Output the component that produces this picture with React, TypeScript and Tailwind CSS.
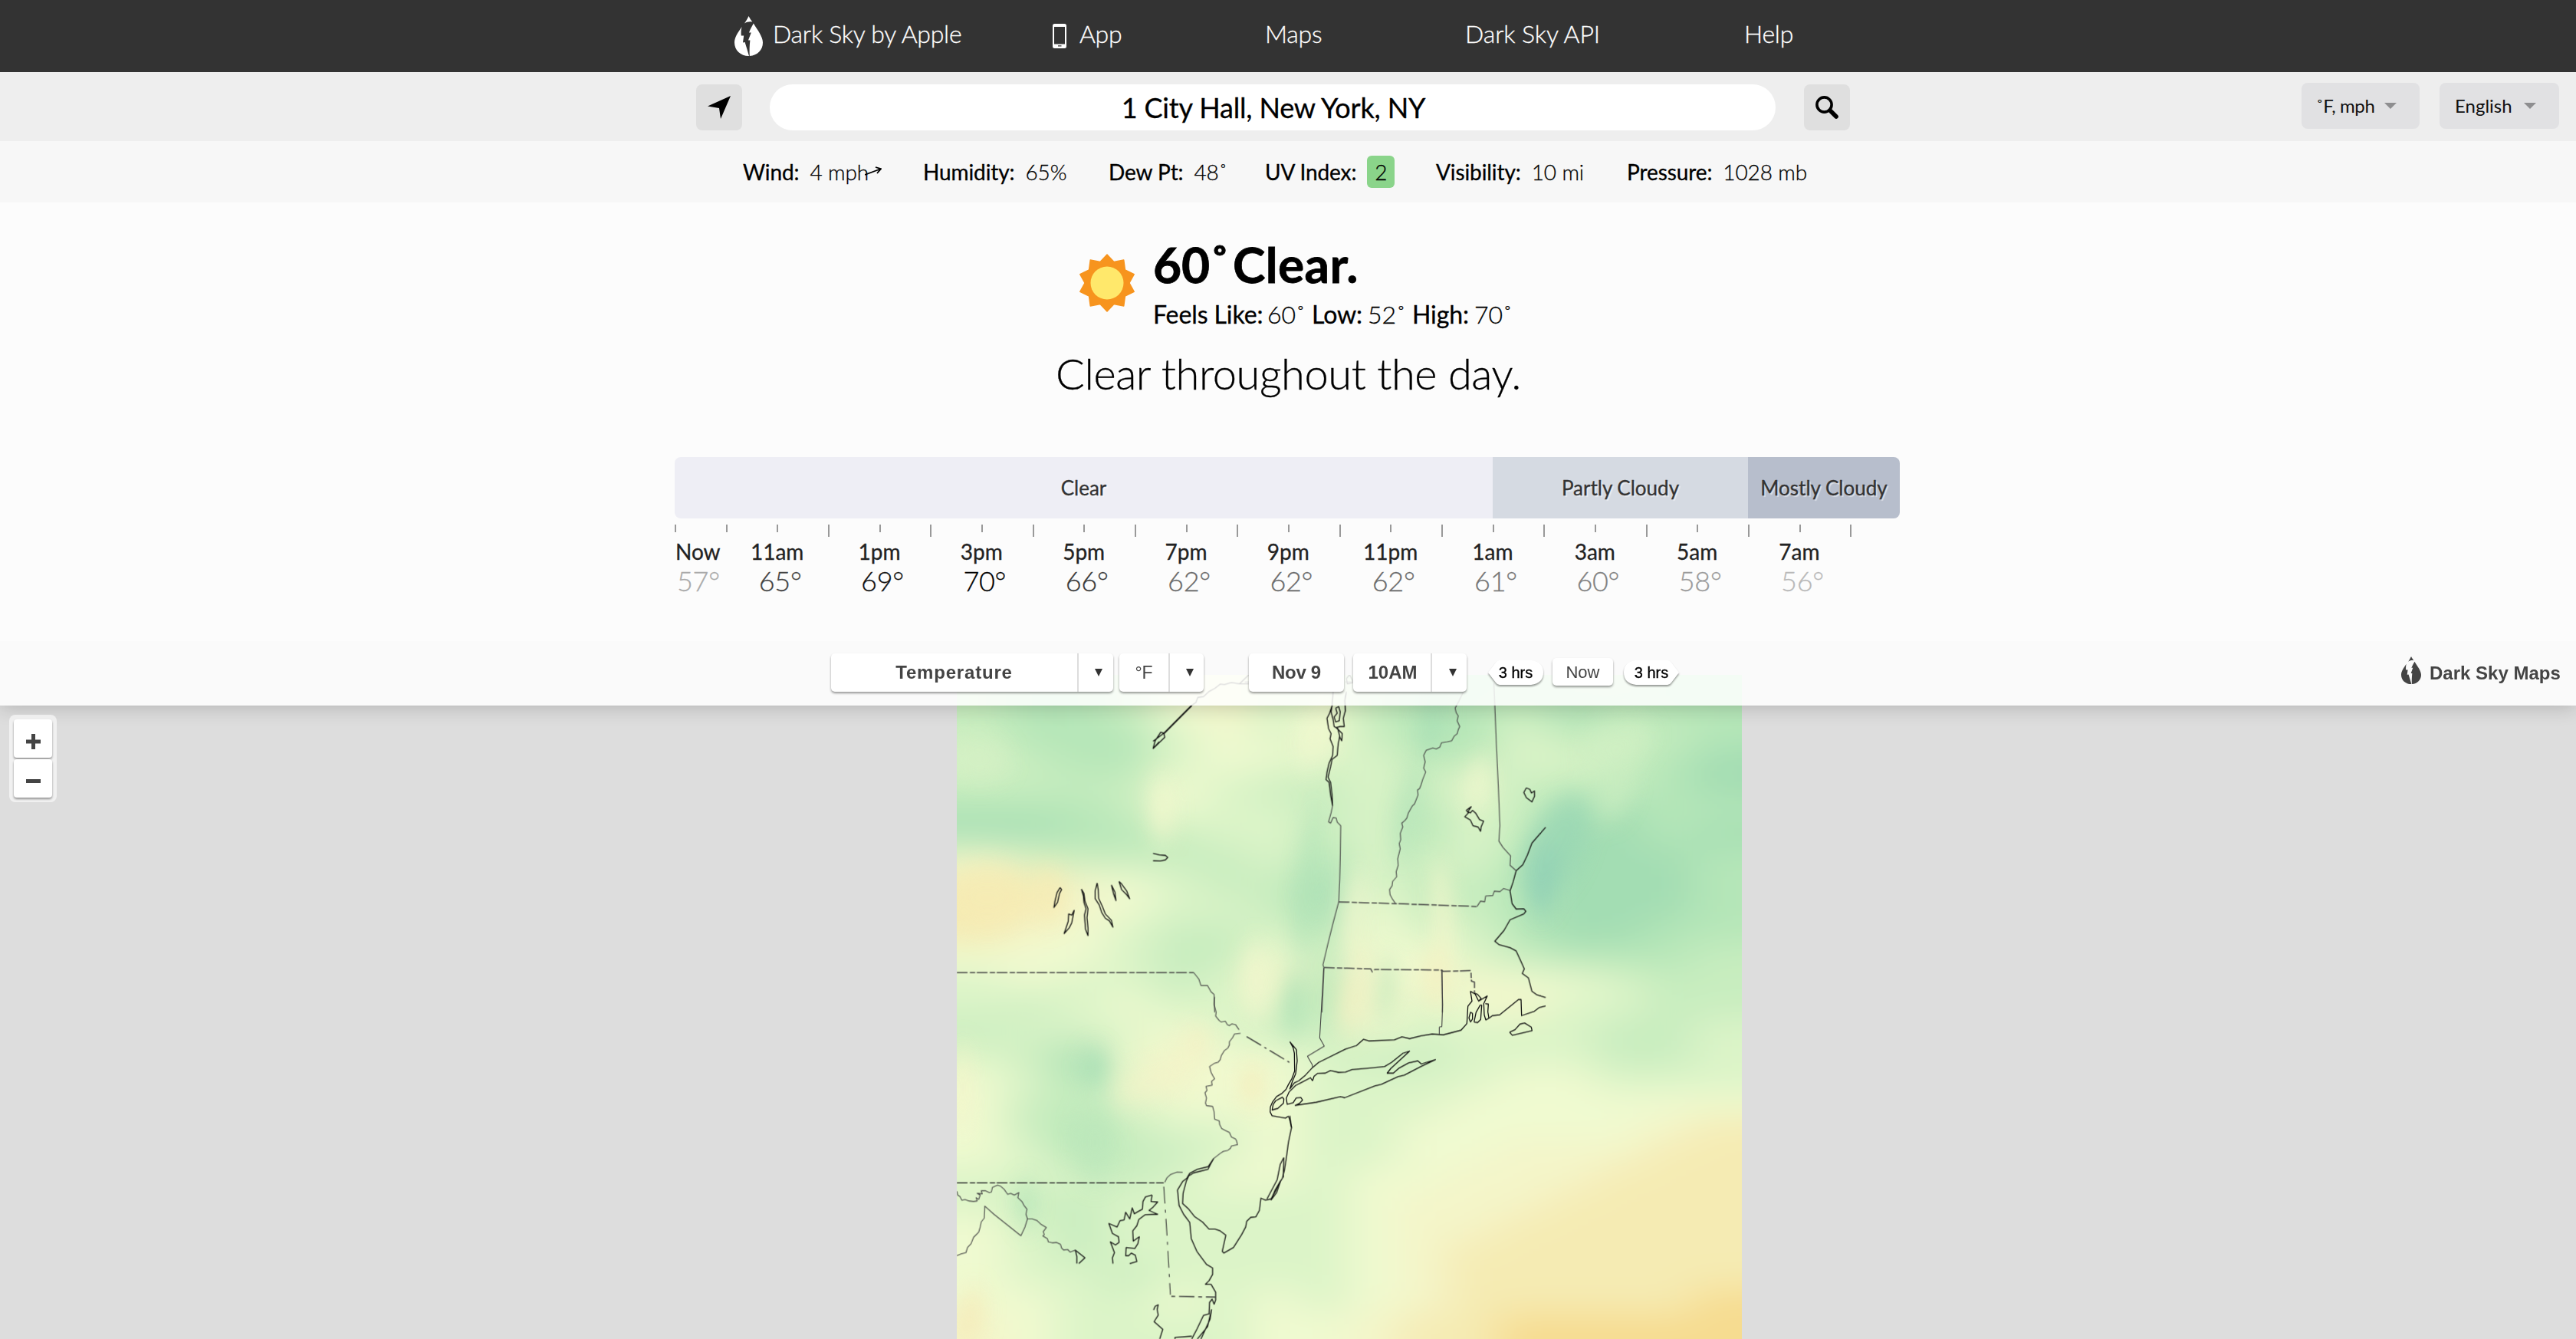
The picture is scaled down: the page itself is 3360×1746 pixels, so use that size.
import React from "react";

const LATO = "font-[Lato,sans-serif] [-webkit-text-stroke:0.3px]";
const ARIAL = "font-['Liberation_Sans',Arial,sans-serif] [-webkit-text-stroke:0px]";

function DropLogo({ className }: { className: string }) {
  return (
    <svg viewBox="0 0 37 52" className={className} preserveAspectRatio="none" fill="currentColor">
      <path d="M18.5 0 C20 3 21.5 5.2 23.4 7.6 C19.5 6.8 16 7.6 13 9.6 C15 6.5 17 3.5 18.5 0Z" />
      <path d="M9.6 14 C4 22 0 28 0 34.5 C0 44.5 8 52 18.5 52 L19 52 C17.4 46 15.4 40 13.6 34 L11 34.4 L12.2 25.4 L8.8 25.4 C8.4 21 8.6 17.5 9.6 14Z" />
      <path d="M24.8 9.6 C23 13 20.8 17 19 21.4 L21.8 21.4 L18 31.6 L20.4 31.6 C19.6 39 19.4 45 19.8 52 C30 51.4 37 44 37 34.5 C37 27 30 18 24.8 9.6Z" />
    </svg>
  );
}

const stats = [
  { label: "Wind:", value: "4 mph", box: "w-[235px]", arrow: true },
  { label: "Humidity:", value: "65%", box: "w-[242px]" },
  { label: "Dew Pt:", value: "48˚", box: "w-[204px]" },
  { label: "UV Index:", value: "2", box: "w-[223px]", badge: true },
  { label: "Visibility:", value: "10 mi", box: "w-[249px]" },
  { label: "Pressure:", value: "1028 mb", box: "w-[260px]" },
];

const hours = [
  ["11am", "65°", "text-[#444]"],
  ["1pm", "69°", "text-[#111]"],
  ["3pm", "70°", "text-black"],
  ["5pm", "66°", "text-[#3a3a3a]"],
  ["7pm", "62°", "text-[#6b6b6b]"],
  ["9pm", "62°", "text-[#6b6b6b]"],
  ["11pm", "62°", "text-[#6b6b6b]"],
  ["1am", "61°", "text-[#767676]"],
  ["3am", "60°", "text-[#828282]"],
  ["5am", "58°", "text-[#9b9b9b]"],
  ["7am", "56°", "text-[#b9b9b9]"],
];

const palette = ["#92d1b5", "#a3ddb3", "#b5e6b8", "#c8edbf", "#dcf4c8", "#f0fad0", "#f4f5c9", "#f5ebb3", "#f6dc90"];
const field = [
  "3223564432223322",
  "3223564532231222",
  "3222454532243332",
  "4322455443244321",
  "3333543343533321",
  "2223544342432122",
  "1122344342431121",
  "5433334243421112",
  "7765433143321112",
  "7765443153321112",
  "7654334254421122",
  "5554335355432223",
  "4544346265655433",
  "4345444264564433",
  "3444543354444334",
  "4315655433444334",
  "5424655444455444",
  "5334555444555555",
  "5323445445555567",
  "5423345445566677",
  "4443455455666777",
  "4334444456667777",
  "5434444456677777",
  "5434444456777777",
  "5443444456777777",
  "5544545456777778",
  "6544445567788888",
];

// x, y, rx, ry, rotation, fill
const spots: [number, number, number, number, number, string][] = [
  [268, 175, 16, 44, 0, "#f4f8ce"],
  [30, 110, 40, 24, 0, "#d4f0c4"],
  [40, 290, 50, 40, 0, "#f6ebb4"],
  [120, 288, 22, 34, 0, "#f6ebb4"],
  [458, 270, 10, 100, 6, "#b0e3b7"],
  [480, 60, 10, 60, 0, "#f3f8cf"],
  [456, 90, 10, 40, 0, "#f3f8cf"],
  [520, 310, 12, 60, 6, "#f2f8cf"],
  [525, 400, 12, 60, 0, "#f6f3c8"],
  [634, 320, 14, 80, -4, "#f4f6cc"],
  [440, 430, 14, 40, 6, "#ace1b5"],
  [560, 410, 12, 44, 6, "#c3eabd"],
  [512, 430, 12, 40, 8, "#f5f1c3"],
  [625, 395, 18, 40, 0, "#f5efbf"],
  [390, 400, 20, 50, 0, "#f2f6cd"],
  [180, 512, 18, 22, 0, "#a0dcb3"],
  [180, 610, 28, 50, 0, "#bce7bb"],
  [385, 535, 20, 26, 0, "#f5ecba"],
  [312, 480, 20, 22, 30, "#f5f0c4"],
  [252, 530, 50, 20, -24, "#f4f3c8"],
  [780, 225, 36, 74, 26, "#98d6b4"],
  [766, 268, 18, 46, 8, "#8ccdb6"],
  [620, 60, 16, 50, 10, "#a8dfb5"],
  [590, 180, 12, 70, 10, "#b4e4b9"],
  [680, 140, 16, 36, 10, "#f0f7cd"],
  [860, 90, 50, 26, -20, "#d2f0c4"],
  [860, 150, 20, 40, 20, "#c8ecc0"],
  [90, 690, 12, 30, 0, "#b0e3b7"],
  [8, 540, 10, 60, 0, "#f4f3c8"],
  [16, 840, 20, 40, 15, "#f5eab8"],
];

const Shape = ({ d }: { d: string }) => <path d={d} vectorEffect="non-scaling-stroke" />;

function WeatherMap() {
  return (
    <svg viewBox="0 0 1024 866" className="absolute left-[1248px] top-[44px] h-[866px] w-[1024px] overflow-hidden">
      <defs>
        <filter id="field" x="-10%" y="-10%" width="120%" height="120%">
          <feGaussianBlur stdDeviation="30 23" />
        </filter>
        <filter id="spots" x="-10%" y="-10%" width="120%" height="120%">
          <feGaussianBlur stdDeviation="13 17" />
        </filter>
      </defs>
      <rect width="1024" height="866" fill="#dcf4c8" />
      <g filter="url(#field)">
        {field.map((row, r) =>
          row.split("").map((c, i) => {
            const x = i === 0 ? -90 : i * 64;
            const y = r === 0 ? -80 : r * 32;
            const w = i === 0 || i === 15 ? 155 : 65;
            const h = r === 0 ? 113 : r === 26 ? 110 : 33;
            return <rect key={`${r}-${i}`} x={x} y={y} width={w} height={h} fill={palette[Number(c)]} />;
          })
        )}
      </g>
      <g filter="url(#spots)" opacity="0.75">
        {spots.map(([x, y, rx, ry, a, f], i) => (
          <ellipse key={i} cx={x} cy={y} rx={rx} ry={ry} fill={f} transform={`rotate(${a} ${x} ${y})`} />
        ))}
      </g>

      {/* northern lakes, coast and borders */}
      <g transform="matrix(.66327 0 0 .33333 -8 -20)" fill="none" stroke="#111" strokeWidth="1.3" strokeLinejoin="round">
        {[
          "M586 60L568 95L586 95M568 95L552 90L538 98L530 96L520 112L508 125L497 145L486 148L482 168L473 180",
          "M473 180L419 288L398 320M474 181L420 289M419 288L413 284L402 318L398 348L410 325L421 304L419 288M399 346L410 322",
          "M398 758L410 764L422 766L427 774L422 784L412 788L398 787",
          "M215 892L209 912L205 945L203 970L210 950L214 915L218 900L215 892",
          "M243 980L238 1000L232 995L231 1025L223 1072L233 1050L238 1030L243 980",
          "M257 898L261 925L262 950L266 975L263 1000L265 1055L270 1080L270 1050L268 1010L270 975L264 945L262 915L257 898",
          "M288 874L284 905L284 935L292 960L297 990L304 1012L312 1022L319 1047L316 1020L304 995L298 965L291 935L290 900L288 874",
          "M316 882L320 915L325 943L323 910L316 882",
          "M331 868L336 900L346 920L352 936L346 905L336 878L331 868",
          "M750 180L745 210L740 230L743 270L748 290L746 310L752 340L751 375L744 405L740 440L738 470L744 480L747 530L751 572L750 530L747 480L742 460L747 420L750 390L760 375L762 330L765 300L761 270L754 262L752 235L748 205L750 180L752 126",
          "M757 190L763 184L766 205L764 240L757 244L754 225L760 210L757 190",
          "M778 126L775 160L776 200L772 230L774 262L766 262L758 266L770 290L769 318L764 300",
          "M784 60L778 75L780 95L792 90L786 65L784 60",
          "M1024 575L1014 590L1018 600L1011 615L1022 628L1027 650L1037 655L1042 672L1043 655L1048 632L1040 626L1032 600L1026 590L1022 600L1017 595L1024 575",
          "M1132 502L1127 520L1132 540L1143 557L1148 535L1148 514L1142 522L1139 508L1132 502",
          "M1170 656L1143 718L1134 765L1125 803L1112 826L1106 870L1100 905L1104 955L1112 976L1127 975L1131 985L1127 995L1100 1018L1088 1060L1070 1102L1078 1115L1100 1127L1112 1140L1120 1175L1128 1210L1124 1228L1136 1245L1143 1298L1153 1312L1170 1322",
        ].map((d, i) => (
          <Shape key={i} d={d} />
        ))}
        <g stroke="#444" strokeWidth="1.1">
          {[
            "M751 572L748 600L743 635L747 640L752 618L758 620L760 636L767 650L766 780L765 860L763 948L752 1030L742 1110L732 1195L734 1205L730 1380",
            "M1008 126L1000 160L992 190L994 208L998 220L996 240L1001 262L998 275L996 290L990 300L985 318L976 322L965 326L962 342L955 350L948 346L935 355L930 375L933 400L930 425L934 440L928 470L925 490L922 505L918 510L919 530L912 565L908 572L900 600L897 620L893 630L887 640L889 655L884 680L885 705L882 720L884 740L879 780L880 805L876 830L877 850L869 868L868 885L863 900L864 920L868 935L875 955",
            "M1068 92L1070 180L1073 330L1077 500L1080 650L1078 710L1086 735L1101 768L1100 805L1112 826",
            "M1035 966L1042 945L1050 948L1052 925L1066 923L1069 906L1080 908L1087 896L1100 903",
            "M578 88L594 88M776 88L793 88",
            "M478 1225L484 1240L488 1250L492 1275L505 1275L512 1300L518 1310L519 1380",
            "M966 1216L967 1380",
          ].map((d, i) => (
            <Shape key={i} d={d} />
          ))}
        </g>
        <g stroke="#444" strokeWidth="1.5" strokeDasharray="14 3 7 2">
          {[
            "M12 1224L478 1224",
            "M763 948L875 955L1035 966",
            "M734 1205L826 1210L829 1222L834 1212L966 1215L968 1220L1023 1217L1024 1258L1030 1262L1030 1302",
          ].map((d, i) => (
            <Shape key={i} d={d} />
          ))}
        </g>
      </g>

      {/* mid-Atlantic coast and borders */}
      <g transform="matrix(.66327 0 0 .33333 -8 420)" fill="none" stroke="#111" strokeWidth="1.3" strokeLinejoin="round">
        {[
          "M667 465L670 512L664 570L660 630L656 680L652 710L648 722L640 755L630 790L619 795L610 787L607 835L600 860L590 862L582 878L580 900L572 930L556 980L537 1002L534 995L541 932L530 915L520 908L508 908L495 880L480 860L468 830L456 808L457 768L463 722L468 700L478 688L506 674L512 650L517 632L506 664L485 674L470 690L464 710L456 722L446 755L449 815L458 850L470 882L473 945L484 995L503 1046L515 1060L515 1085L508 1110L501 1124L512 1124L521 1155L521 1185L518 1202L514 1182L509 1195L508 1240L497 1246L484 1300L474 1338",
          "M655 628L648 655L642 715L622 790M655 628L654 707M649 718L638 755L630 794L641 765L649 718",
          "M513 1222L505 1290L485 1338M513 1222L510 1260L492 1338",
          "M396 775L383 782L378 800L377 830L368 840L361 848L357 825L352 868L344 842L341 872L333 875L327 900L311 886L318 925L330 938L331 960L324 970L314 958L322 1000L318 1020L319 1043",
          "M396 775L394 800L407 802L398 822L390 835L407 850L382 852L370 870L366 895L358 915L359 955L371 938L368 965L362 984L345 980L344 1012L350 1012L355 1002L363 1010L366 1035L352 1043",
          "M399 1224L402 1210L408 1204L406 1222L408 1245L400 1270L417 1300L411 1338",
          "M441 1338L441 1332L474 1327",
          "M248 1043L248 1015L245 990L264 1020L252 1043",
        ].map((d, i) => (
          <Shape key={i} d={d} />
        ))}
        <g stroke="#444" strokeWidth="1.1">
          {[
            "M519 0L518 30L522 60L521 75L528 92L532 98L540 95L544 108L548 112L553 105L560 108L567 128",
            "M570 142L558 145L554 160L548 175L548 188L545 200L538 210L532 230L530 245L526 255L518 260L509 272L512 295L516 310L519 320L513 330L514 345L502 350L504 365L500 375L503 395L501 415L503 425L515 428L518 450L519 478L528 485L529 500L533 515L540 522L548 530L552 548L560 555L562 562L564 578L552 583L550 592L545 600L536 604L530 612L517 632",
            "M12 760L14 775L18 780L22 795L28 792L36 798L45 800L52 798L50 785L55 792L58 775L52 768L62 770L60 758L68 758L76 765L80 763L82 745L92 736L98 740L105 752L112 772L118 768L125 775L134 765L132 785L140 800L144 815L150 830L148 850L151 868L160 868L170 875L178 890L188 902L182 918L184 930L181 935L190 945L192 958L200 962L208 960L216 968L218 982L222 990L230 988L235 998L245 990",
            "M12 1012L20 1005L30 1000L33 980L40 965L45 940L55 920L58 900L60 880L66 865L67 818L85 850L138 934L146 900L151 868",
            "M421 725L425 708L432 695L445 685L456 686",
          ].map((d, i) => (
            <Shape key={i} d={d} />
          ))}
        </g>
        <g stroke="#333" strokeWidth="1.4">
          <path d="M12 727L419 727" strokeDasharray="14 3 7 2" vectorEffect="non-scaling-stroke" />
          <path d="M419 742L425 920L432 1165" strokeDasharray="22 8 4 8" strokeWidth="1.1" vectorEffect="non-scaling-stroke" />
          <path d="M434 1171L521 1174" strokeDasharray="5 5 20 5" vectorEffect="non-scaling-stroke" />
          <path d="M582 155L668 258" strokeDasharray="22 5 3 5" vectorEffect="non-scaling-stroke" />
        </g>
      </g>

      {/* New York harbour, Long Island, southern New England */}
      <g transform="matrix(.33333 0 0 .33333 392 360)" fill="none" stroke="#111" strokeWidth="3.9" strokeLinejoin="round">
        {[
          "M122 646L110 654L58 645L50 630L51 610L60 590L75 570L95 558L112 542L122 522L135 500L146 470L145 400L140 378L128 356L153 386L156 430L150 480L138 508L127 540L145 516L162 508L188 486L216 456L240 436L345 384L388 370L415 346L436 352L536 348L566 336L596 343L640 332L684 325L728 328L797 310L820 284L824 216L840 196L834 158L852 168L866 196L900 176L886 206L888 250L894 270L908 262L920 253L948 250L1022 190L1032 190L1034 253L1084 236L1104 221L1128 215",
          "M866 196L876 186L862 170L848 164",
          "M216 508L208 496L170 516L150 526L124 552L113 576L117 600L140 594L152 575L170 573L177 583L165 596L148 604L230 592L325 570L342 574L460 528L485 522L550 492L575 486L640 452L697 425L642 442L628 430L592 438L555 458L532 478L508 478L522 460L596 392L570 400L525 436L498 452L440 458L370 464L345 474L318 475L286 468L266 478L236 479L222 490L216 508",
          "M62 600L72 586L98 572L104 580L102 596L80 616L58 622L62 600",
          "M834 278L828 262L834 240L842 244L842 266L834 278M848 278L856 240L872 212L878 212L874 268L862 280L848 278M906 262L902 238L904 208L892 206",
          "M987 318L1008 308L1028 286L1046 282L1072 298L1075 312L998 330L987 318",
          "M122 646L128 665L134 690",
        ].map((d, i) => (
          <path key={i} d={d} />
        ))}
        <g stroke="#444" strokeWidth="3.3">
          <path d="M260 66L244 340L262 372L196 412L215 445L216 456" />
          <path d="M722 74L725 210L722 296L712 298L712 326" />
        </g>
      </g>
    </svg>
  );
}

const cell = "flex h-[50px] items-center justify-center";
const btnShadow = "shadow-[0_2px_3px_rgba(0,0,0,0.4)]";

function Caret() {
  return (
    <svg viewBox="0 0 10 10" className="h-[10px] w-[10px]" preserveAspectRatio="none">
      <path d="M0 0H10L5 10Z" fill="#333" />
    </svg>
  );
}

export default function App() {
  return (
    <div className={`flex h-[1746px] w-[3360px] flex-col overflow-hidden bg-[#fcfcfc] text-black ${LATO}`}>
      <nav className="flex h-[94px] items-center bg-[#333] pl-[958px] text-[32px] font-light tracking-[-0.25px] text-white">
        <div className="flex w-[415px] items-center">
          <DropLogo className="h-[52px] w-[37px]" />
          <span className="-mt-[7px] ml-[13px] whitespace-nowrap">Dark Sky by Apple</span>
        </div>
        <div className="flex w-[277px] items-center">
          <svg viewBox="0 0 18 32" className="h-[32px] w-[18px]">
            <path fillRule="evenodd" fill="#fff" d="M2.5 0H15.5Q18 0 18 2.5V29.5Q18 32 15.5 32H2.5Q0 32 0 29.5V2.5Q0 0 2.5 0ZM2 4V26.5H16V4ZM7 28.2V29.4H11.5V28.2Z" />
          </svg>
          <span className="-mt-[7px] ml-[17px]">App</span>
        </div>
        <span className="-mt-[7px] w-[261px]">Maps</span>
        <span className="-mt-[7px] w-[364px] tracking-[-0.1px]">Dark Sky API</span>
        <span className="-mt-[7px]">Help</span>
      </nav>

      <div className="flex h-[90px] items-start bg-[#eee] pl-[908px] pt-[16px]">
        <div className="flex h-[60px] w-[60px] items-center justify-center rounded-[8px] bg-[#dfdfdf]">
          <svg viewBox="0 0 30 30" className="h-[30px] w-[30px]">
            <path d="M30 0L17 30L15 16L0 13.5Z" />
          </svg>
        </div>
        <div className="ml-[36px] flex h-[60px] w-[1312px] items-center justify-center rounded-full bg-white pl-[2px] text-[36px] tracking-[-0.16px]">
          1 City Hall, New York, NY
        </div>
        <div className="ml-[37px] flex h-[60px] w-[60px] items-center justify-center rounded-[8px] bg-[#dfdfdf]">
          <svg viewBox="0 0 30 30" className="h-[30px] w-[30px]" fill="none" stroke="#000">
            <circle cx="11.5" cy="11.5" r="9.6" strokeWidth="3.6" />
            <path d="M19 19L27 27" strokeWidth="5.6" strokeLinecap="round" />
          </svg>
        </div>
        <div className="-mt-[2px] ml-[589px] flex h-[60px] w-[154px] items-center rounded-[8px] bg-[#e1e1e3] pl-[19px] text-[24px] tracking-[-0.4px] text-[#111] [-webkit-text-stroke:0px]">
          <span className="w-[89px] whitespace-nowrap">˚F, mph</span>
          <svg viewBox="0 0 16 8" className="h-[8px] w-[16px]"><path d="M0 0H16L8 8Z" fill="#8e8e90" /></svg>
        </div>
        <div className="-mt-[2px] ml-[26px] flex h-[60px] w-[156px] items-center rounded-[8px] bg-[#e1e1e3] pl-[20px] text-[24px] text-[#111] [-webkit-text-stroke:0px]">
          <span className="w-[90px]">English</span>
          <svg viewBox="0 0 16 8" className="h-[8px] w-[16px]"><path d="M0 0H16L8 8Z" fill="#8e8e90" /></svg>
        </div>
      </div>

      <div className="flex h-[80px] items-center bg-[#f7f7f7] pl-[969px] text-[28px] tracking-[-0.1px]">
        {stats.map((s) => (
          <div key={s.label} className={`flex items-center gap-[14px] whitespace-nowrap ${s.box}`}>
            <span>{s.label}</span>
            {s.badge ? (
              <span className="flex h-[42px] w-[36px] items-center justify-center rounded-[6px] bg-[#8ad48a] font-light">{s.value}</span>
            ) : (
              <span className="flex items-center font-light">
                {s.value}
                {s.arrow && (
                  <svg viewBox="0 0 22 12" className="-ml-[5px] -mt-[2px] h-[12px] w-[22px]" fill="none" stroke="#000" strokeWidth="1.8">
                    <path d="M0 11L20 3.5M14 1L21 3.2L16 9" />
                  </svg>
                )}
              </span>
            )}
          </div>
        ))}
      </div>

      <section className="flex h-[332px] flex-col">
        <div className="mt-[42px] flex h-[147px] pl-[1406px]">
          <svg viewBox="-38 -38 76 76" className="mt-[25px] h-[76px] w-[76px]">
            <polygon
              fill="#f7941e"
              stroke="#f7941e"
              strokeWidth="1.5"
              strokeLinejoin="round"
              points={Array.from({ length: 20 }, (_, i) => {
                const r = i % 2 ? 29 : 37;
                const a = (i * Math.PI) / 10;
                return `${(r * Math.sin(a)).toFixed(2)},${(-r * Math.cos(a)).toFixed(2)}`;
              }).join(" ")}
            />
            <circle r="21.5" fill="#ffe86b" />
          </svg>
          <div className="ml-[22px]">
            <div className="flex text-[64px] font-bold leading-[77px] [-webkit-text-stroke:0.8px]">
              <span className="w-[104px]">60˚</span>
              <span className="tracking-[0.4px]">Clear.</span>
            </div>
            <div className="mt-[8px] flex whitespace-nowrap text-[32px] leading-[38px] tracking-[-0.1px]">
              <span className="w-[149px]">Feels Like:</span>
              <span className="w-[58px] font-light">60˚</span>
              <span className="w-[73px]">Low:</span>
              <span className="w-[58px] font-light">52˚</span>
              <span className="w-[81px]">High:</span>
              <span className="font-light">70˚</span>
            </div>
          </div>
        </div>
        <div className="pl-[1377px] text-[56px] font-light leading-[67px] tracking-[-0.42px]">Clear throughout the day.</div>
      </section>

      <section className="ml-[880px] flex h-[240px] w-[1600px] flex-col">
        <div className="flex h-[80px] w-[1598px] overflow-hidden rounded-[8px] text-[26px] text-[#333] [text-shadow:2px_2px_1px_rgba(255,255,255,0.5)]">
          <div className="flex w-[1067px] items-center justify-center bg-[#eeeef5]">Clear</div>
          <div className="flex w-[333px] items-center justify-center bg-[#d5dae2]">Partly Cloudy</div>
          <div className="flex w-[198px] items-center justify-center whitespace-nowrap bg-[#b7becc]">Mostly Cloudy</div>
        </div>
        <div className="mt-[8px] flex h-[18px]">
          {Array.from({ length: 24 }, (_, i) => (
            <div key={i} className="flex-1">
              <div className={i > 2 && i % 2 ? "h-[16px] w-[2px] bg-[#999]" : "h-[10px] w-[2px] bg-[#999]"} />
            </div>
          ))}
        </div>
        <div className="flex">
          <div className="w-[67px]">
            <div className="pl-[1px] text-[28px] leading-[34px] text-[#222]">Now</div>
            <div className="pl-[3px] text-[36px] font-light leading-[43px] tracking-[-0.3px] text-[#aaa]">57°</div>
          </div>
          {hours.map(([h, t, c]) => (
            <div key={h} className="w-[133.33px] text-center">
              <div className="text-[28px] leading-[34px] text-[#222]">{h}</div>
              <div className={`pl-[8px] text-[36px] font-light leading-[43px] tracking-[-0.3px] ${c}`}>{t}</div>
            </div>
          ))}
        </div>
      </section>

      <section className={`relative h-[910px] overflow-hidden bg-[#ddd] ${ARIAL}`}>
        <WeatherMap />
        <div className="relative flex h-[84px] items-start bg-white/85 pl-[1084px] pt-[16px] text-[24px] font-bold text-[#444] shadow-[0_2px_24px_rgba(0,0,0,0.2)]">
          <div className={`flex rounded-[5px] bg-white ${btnShadow}`}>
            <div className={`${cell} w-[321px] tracking-[0.8px]`}>Temperature</div>
            <div className={`${cell} w-[47px] border-l-2 border-[#ddd] pl-[6px]`}><Caret /></div>
          </div>
          <div className={`ml-[8px] flex rounded-[5px] bg-white ${btnShadow}`}>
            <div className={`${cell} w-[64px] text-[23px] font-normal`}>°F</div>
            <div className={`${cell} w-[46px] border-l-2 border-[#ddd] pl-[8px]`}><Caret /></div>
          </div>
          <div className={`${cell} ml-[59px] w-[124px] rounded-[5px] bg-white tracking-[-0.3px] ${btnShadow}`}>Nov 9</div>
          <div className={`ml-[12px] flex rounded-[5px] bg-white ${btnShadow}`}>
            <div className={`${cell} w-[101px] pl-[2px]`}>10AM</div>
            <div className={`${cell} w-[47px] border-l-2 border-[#ddd] pl-[8px]`}><Caret /></div>
          </div>
          <div className="relative ml-[28px] mt-[9px] flex h-[32px] w-[72px] items-center justify-center text-[20px] font-normal text-black">
            <svg viewBox="0 0 72 32" className="absolute inset-0 h-[32px] w-[72px] overflow-visible drop-shadow-[0_2px_1px_rgba(0,0,0,0.4)]">
              <path d="M15 0H56Q72 2 72 16Q72 30 56 32H15Q12 32 10 29L0 16L10 3Q12 0 15 0Z" fill="#fff" />
            </svg>
            <span className="relative [-webkit-text-stroke:0.3px]">3 hrs</span>
          </div>
          <div className={`ml-[12px] mt-[6px] flex h-[36px] w-[79px] items-center justify-center rounded-[5px] bg-white text-[22px] font-normal ${btnShadow}`}>Now</div>
          <div className="relative ml-[14px] mt-[9px] flex h-[32px] w-[72px] items-center justify-center text-[20px] font-normal text-black">
            <svg viewBox="0 0 72 32" className="absolute inset-0 h-[32px] w-[72px] overflow-visible drop-shadow-[0_2px_1px_rgba(0,0,0,0.4)]">
              <path d="M57 0H16Q0 2 0 16Q0 30 16 32H57Q60 32 62 29L72 16L62 3Q60 0 57 0Z" fill="#fff" />
            </svg>
            <span className="relative [-webkit-text-stroke:0.3px]">3 hrs</span>
          </div>
          <div className="ml-[942px] mt-[4px] flex h-[36px] items-center">
            <DropLogo className="h-[36px] w-[26px]" />
            <span className="ml-[11px] mt-[7px] whitespace-nowrap">Dark Sky Maps</span>
          </div>
        </div>
        <div className="absolute left-[12px] top-[96px] flex h-[114px] w-[62px] flex-col gap-[2px] rounded-[8px] bg-white/60 p-[6px]">
          <div className={`flex h-[50px] items-center justify-center rounded-[4px] bg-white ${btnShadow}`}>
            <svg viewBox="0 0 19 20" className="mt-[7px] h-[20px] w-[19px]"><path d="M0 7.5H7V0H12V7.5H19V12.5H12V20H7V12.5H0Z" fill="#444" /></svg>
          </div>
          <div className={`flex h-[50px] items-center justify-center rounded-[4px] bg-white ${btnShadow}`}>
            <div className="mt-[7px] h-[5px] w-[19px] bg-[#444]" />
          </div>
        </div>
      </section>
    </div>
  );
}
